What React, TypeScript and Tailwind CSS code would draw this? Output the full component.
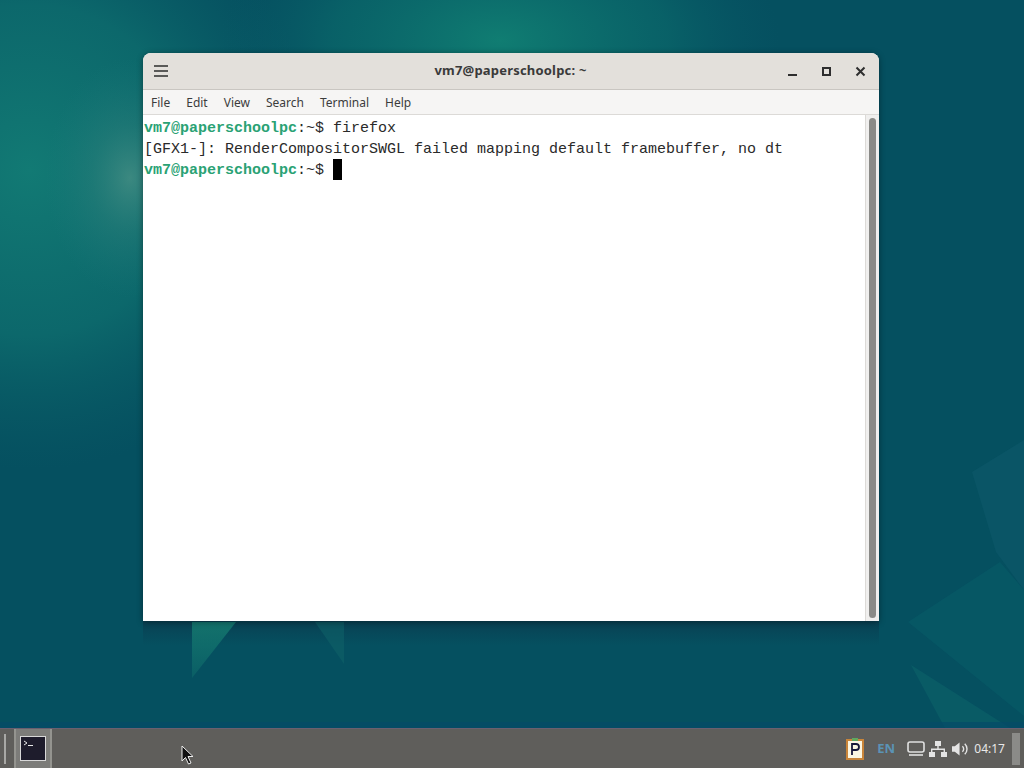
import React from "react";

function Wallpaper() {
  return (
    <svg className="absolute inset-0 w-full h-full" viewBox="0 0 1024 768" preserveAspectRatio="none">
      <defs>
        <radialGradient id="left" cx="0.5" cy="0.5" r="0.5">
          <stop offset="0" stopColor="#127a74" stopOpacity="1" />
          <stop offset="0.55" stopColor="#0f7270" stopOpacity="0.7" />
          <stop offset="1" stopColor="#0a6068" stopOpacity="0" />
        </radialGradient>
        <radialGradient id="top" cx="0.5" cy="0.5" r="0.5">
          <stop offset="0" stopColor="#107d72" stopOpacity="1" />
          <stop offset="0.6" stopColor="#0b6c6c" stopOpacity="0.6" />
          <stop offset="1" stopColor="#085a68" stopOpacity="0" />
        </radialGradient>
        <radialGradient id="glow" cx="0.5" cy="0.5" r="0.5">
          <stop offset="0" stopColor="#4f9488" stopOpacity="0.7" />
          <stop offset="0.45" stopColor="#35857f" stopOpacity="0.35" />
          <stop offset="1" stopColor="#1d7a7c" stopOpacity="0" />
        </radialGradient>
        <linearGradient id="tri" x1="0" y1="0" x2="0" y2="1">
          <stop offset="0" stopColor="#14786f" stopOpacity="0.9" />
          <stop offset="1" stopColor="#14786f" stopOpacity="0.35" />
        </linearGradient>
        <linearGradient id="under" x1="0" y1="0" x2="0" y2="1">
          <stop offset="0" stopColor="#0b3448" stopOpacity="0.55" />
          <stop offset="1" stopColor="#0b3448" stopOpacity="0" />
        </linearGradient>
      </defs>
      <rect width="1024" height="768" fill="#055060" />
      <ellipse cx="30" cy="170" rx="290" ry="300" fill="url(#left)" />
      <ellipse cx="500" cy="40" rx="280" ry="150" fill="url(#top)" />
      <ellipse cx="130" cy="178" rx="85" ry="120" fill="url(#glow)" />
      <rect x="143" y="621" width="736" height="24" fill="url(#under)" />
      <polygon points="192,622 236,622 192,678" fill="url(#tri)" />
      <polygon points="315,622 344,622 344,664" fill="#0f6068" opacity="0.6" />
      <polygon points="972,472 1024,440 1024,590 996,552" fill="#0f5a6c" opacity="0.55" />
      <polygon points="908,622 1000,562 1024,590 1024,716" fill="#08606a" opacity="0.45" />
      <polygon points="911,665 1010,728 945,728" fill="#0c6068" opacity="0.7" />
      <rect x="0" y="722" width="1024" height="6" fill="#054a68" opacity="0.7" />
    </svg>
  );
}

function TerminalIcon() {
  return (
    <svg width="26" height="25" viewBox="0 0 26 25" className="block">
      <rect x="0.5" y="0.5" width="25" height="24" fill="#1e1c2c" stroke="#d8d8d8" />
      <path d="M4 5l3 2-3 2" fill="none" stroke="#e8e8e8" strokeWidth="1" />
      <path d="M8 9.5h5" stroke="#e8e8e8" strokeWidth="1" />
    </svg>
  );
}

function Tray() {
  return (
    <div className="flex items-center h-full pr-[4px]">
      <svg width="18" height="22" viewBox="0 0 18 22" className="block">
        <rect x="1" y="2" width="16" height="19" fill="#fbf6e2" stroke="#c9853a" strokeWidth="2" />
        <rect x="6" y="0" width="6" height="3" fill="#5fa85f" />
        <path d="M6 17V6h4a2.8 2.8 0 0 1 0 6H6" fill="none" stroke="#18183a" strokeWidth="1.8" />
      </svg>
      <span className="ml-[13px] w-[18px] text-[13px] font-bold text-[#5b93b5] font-['Noto_Sans',sans-serif]">EN</span>
      <svg width="18" height="15" viewBox="0 0 18 15" className="block ml-[12px]">
        <rect x="1" y="1" width="16" height="10" rx="2" fill="none" stroke="#e0e0e0" strokeWidth="1.6" />
        <path d="M2 14h14" stroke="#e0e0e0" strokeWidth="1.6" />
      </svg>
      <svg width="18" height="16" viewBox="0 0 18 16" className="block ml-[4px]" fill="#e4e4e4">
        <rect x="6" y="0" width="6" height="5" />
        <rect x="0" y="11" width="6" height="5" />
        <rect x="12" y="11" width="6" height="5" />
        <path d="M8.3 5h1.4v2.5H16V11h-1.4V9H3.4v2H2V7.5h6.3z" />
      </svg>
      <svg width="17" height="16" viewBox="0 0 18 16" className="block ml-[5px]">
        <path d="M0 5h3l5-4v14l-5-4H0z" fill="#e4e4e4" />
        <path d="M11 5a4 4 0 0 1 0 6M13.5 2.5a7.5 7.5 0 0 1 0 11" fill="none" stroke="#e4e4e4" strokeWidth="1.5" />
      </svg>
      <span className="ml-[5px] text-[12px] text-[#e8e8e8] font-['Noto_Sans',sans-serif]">04:17</span>
      <div className="ml-[7px] w-[8px] h-[32px] bg-[#8b8b88]" />
    </div>
  );
}

export default function App() {
  const menus = ["File", "Edit", "View", "Search", "Terminal", "Help"];
  return (
    <div className="relative w-[1024px] h-[768px] overflow-hidden flex flex-col bg-[#055060]">
      <Wallpaper />
      <main className="relative flex-1 pt-[53px] pl-[143px]">
        <div className="w-[736px] h-[568px] flex flex-col rounded-t-[8px] overflow-hidden bg-white shadow-[0_1px_6px_rgba(0,0,0,0.4)] font-['Noto_Sans',sans-serif]">
          <div className="h-[37px] flex items-center bg-[#e3e0db] border-b border-[#c9c6c1] pl-[11px] pr-[13px]">
            <svg width="14" height="12" viewBox="0 0 14 12" className="block">
              <path d="M0 1h14M0 6h14M0 11h14" stroke="#2e2e2e" strokeWidth="1.7" />
            </svg>
            <div className="flex-1 text-center text-[13px] tracking-[0.2px] font-bold text-[#3a3a3a] pl-[66px]">vm7@paperschoolpc: ~</div>
            <div className="flex items-center gap-[23px]">
              <svg width="11" height="11" viewBox="0 0 11 11" className="block"><path d="M1 9h9" stroke="#2e2e2e" strokeWidth="2" /></svg>
              <svg width="11" height="11" viewBox="0 0 11 11" className="block"><rect x="2" y="2" width="7" height="7" fill="none" stroke="#2e2e2e" strokeWidth="2" /></svg>
              <svg width="11" height="11" viewBox="0 0 11 11" className="block"><path d="M1.5 1.5l8 8M9.5 1.5l-8 8" stroke="#2e2e2e" strokeWidth="2" /></svg>
            </div>
          </div>
          <div className="h-[25px] flex items-center bg-[#f6f5f4] border-b border-[#dcdad7] pl-[8px] pt-[1px] text-[12px] text-[#3c3c3c] gap-[16px]">
            {menus.map((m) => <span key={m}>{m}</span>)}
          </div>
          <div className="flex-1 flex min-h-0 bg-white">
            <div className="flex-1 pl-[1px] pt-[3px] font-['Liberation_Mono',monospace] text-[15px] leading-[21px] text-[#2a2a2a] whitespace-pre">
              <div><span className="font-bold text-[#2aa274]">vm7@paperschoolpc</span>:~$ firefox</div>
              <div>[GFX1-]: RenderCompositorSWGL failed mapping default framebuffer, no dt</div>
              <div className="flex items-center h-[21px]"><span className="font-bold text-[#2aa274]">vm7@paperschoolpc</span>:~$ <span className="inline-block w-[9px] h-[21px] -translate-y-px bg-black" /></div>
            </div>
            <div className="w-[14px] bg-[#f0efee] border-l border-[#dcdad7] py-[3px] px-[3px]">
              <div className="h-full w-full rounded-full bg-[#8a8a87]" />
            </div>
          </div>
        </div>
      </main>
      <footer className="relative h-[40px] flex items-center justify-between bg-[#5f5e5b] border-t border-[#6a5f70]">
        <div className="flex items-center h-full">
          <div className="ml-[4px] w-[2px] h-[30px] bg-[#a8a8a5]" />
          <div className="ml-[8px] w-[38px] h-full flex items-center justify-center bg-[#7c7c79] border-x-2 border-[#94948f]">
            <TerminalIcon />
          </div>
        </div>
        <Tray />
      </footer>
      <svg width="14" height="21" viewBox="0 0 14 21" className="absolute left-[181px] top-[745px]">
        <path d="M1 1v15l3.5-3.5 3 6.5 2.5-1-3-6.5h5z" fill="#111" stroke="#eee" strokeWidth="1" />
      </svg>
    </div>
  );
}
